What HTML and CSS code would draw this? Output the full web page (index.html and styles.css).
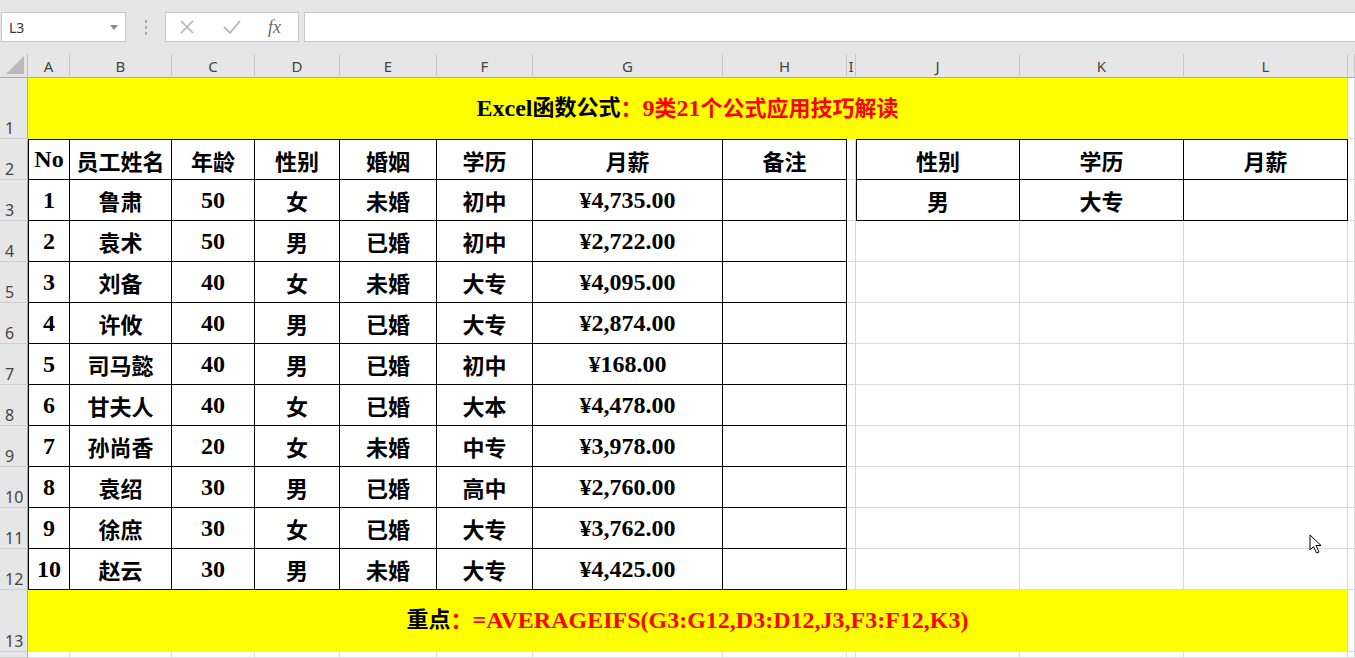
FILE: index.html
```html
<!DOCTYPE html>
<html lang="zh">
<head>
<meta charset="utf-8">
<title>Excel</title>
<link rel="stylesheet" href="styles.css">
</head>
<body>
<div class="app">
  <div class="bar">
    <div class="namebox"><span class="nm">L3</span><svg class="caret" width="8" height="5" viewBox="0 0 8 5"><path d="M0 0 L8 0 L4 5 Z" fill="#8a8a8a"/></svg></div>
    <div class="grip"><i></i><i></i><i></i></div>
    <div class="fxbox">
      <svg class="ic" width="18" height="18" viewBox="0 0 18 18"><path d="M3 3 L15 15 M15 3 L3 15" stroke="#b4b4b4" stroke-width="1.6" fill="none"/></svg>
      <svg class="ic" width="20" height="18" viewBox="0 0 20 18"><path d="M2 9 L8 15 L18 3" stroke="#b4b4b4" stroke-width="1.8" fill="none"/></svg>
      <span class="fx">fx</span>
    </div>
    <div class="input"></div>
  </div>

  <div class="grid">
    <!-- header -->
    <div class="corner"><svg width="18" height="18" viewBox="0 0 18 18"><path d="M18 0 L18 18 L0 18 Z" fill="#b9b9b9"/></svg></div>
    <div class="ch">A</div><div class="ch">B</div><div class="ch">C</div><div class="ch">D</div><div class="ch">E</div><div class="ch">F</div><div class="ch">G</div><div class="ch">H</div><div class="ch">I</div><div class="ch">J</div><div class="ch">K</div><div class="ch">L</div><div class="ch"></div>

    <!-- row 1 -->
    <div class="rh">1</div>
    <div class="c title"><span class="lat">Excel</span>函数公式<span class="red">：<span class="lat">9</span>类<span class="lat">21</span>个公式应用技巧解读</span></div>
    <div class="c"></div>

    <!-- row 2 -->
    <div class="rh">2</div>
    <div class="c b bt bl n">No</div><div class="c b bt">员工姓名</div><div class="c b bt">年龄</div><div class="c b bt">性别</div><div class="c b bt">婚姻</div><div class="c b bt">学历</div><div class="c b bt">月薪</div><div class="c b bt">备注</div>
    <div class="c"></div>
    <div class="c b bt bl">性别</div><div class="c b bt">学历</div><div class="c b bt">月薪</div>
    <div class="c"></div>

    <!-- row 3 -->
    <div class="rh">3</div>
    <div class="c b bl n">1</div><div class="c b">鲁肃</div><div class="c b n">50</div><div class="c b">女</div><div class="c b">未婚</div><div class="c b">初中</div><div class="c b n">¥4,735.00</div><div class="c b"></div>
    <div class="c"></div>
    <div class="c b bl">男</div><div class="c b">大专</div><div class="c b"></div>
    <div class="c"></div>

    <!-- row 4 -->
    <div class="rh">4</div>
    <div class="c b bl n">2</div><div class="c b">袁术</div><div class="c b n">50</div><div class="c b">男</div><div class="c b">已婚</div><div class="c b">初中</div><div class="c b n">¥2,722.00</div><div class="c b"></div>
    <div class="c"></div><div class="c"></div><div class="c"></div><div class="c"></div><div class="c"></div>

    <!-- row 5 -->
    <div class="rh">5</div>
    <div class="c b bl n">3</div><div class="c b">刘备</div><div class="c b n">40</div><div class="c b">女</div><div class="c b">未婚</div><div class="c b">大专</div><div class="c b n">¥4,095.00</div><div class="c b"></div>
    <div class="c"></div><div class="c"></div><div class="c"></div><div class="c"></div><div class="c"></div>

    <!-- row 6 -->
    <div class="rh">6</div>
    <div class="c b bl n">4</div><div class="c b">许攸</div><div class="c b n">40</div><div class="c b">男</div><div class="c b">已婚</div><div class="c b">大专</div><div class="c b n">¥2,874.00</div><div class="c b"></div>
    <div class="c"></div><div class="c"></div><div class="c"></div><div class="c"></div><div class="c"></div>

    <!-- row 7 -->
    <div class="rh">7</div>
    <div class="c b bl n">5</div><div class="c b">司马懿</div><div class="c b n">40</div><div class="c b">男</div><div class="c b">已婚</div><div class="c b">初中</div><div class="c b n">¥168.00</div><div class="c b"></div>
    <div class="c"></div><div class="c"></div><div class="c"></div><div class="c"></div><div class="c"></div>

    <!-- row 8 -->
    <div class="rh">8</div>
    <div class="c b bl n">6</div><div class="c b">甘夫人</div><div class="c b n">40</div><div class="c b">女</div><div class="c b">已婚</div><div class="c b">大本</div><div class="c b n">¥4,478.00</div><div class="c b"></div>
    <div class="c"></div><div class="c"></div><div class="c"></div><div class="c"></div><div class="c"></div>

    <!-- row 9 -->
    <div class="rh">9</div>
    <div class="c b bl n">7</div><div class="c b">孙尚香</div><div class="c b n">20</div><div class="c b">女</div><div class="c b">未婚</div><div class="c b">中专</div><div class="c b n">¥3,978.00</div><div class="c b"></div>
    <div class="c"></div><div class="c"></div><div class="c"></div><div class="c"></div><div class="c"></div>

    <!-- row 10 -->
    <div class="rh">10</div>
    <div class="c b bl n">8</div><div class="c b">袁绍</div><div class="c b n">30</div><div class="c b">男</div><div class="c b">已婚</div><div class="c b">高中</div><div class="c b n">¥2,760.00</div><div class="c b"></div>
    <div class="c"></div><div class="c"></div><div class="c"></div><div class="c"></div><div class="c"></div>

    <!-- row 11 -->
    <div class="rh">11</div>
    <div class="c b bl n">9</div><div class="c b">徐庶</div><div class="c b n">30</div><div class="c b">女</div><div class="c b">已婚</div><div class="c b">大专</div><div class="c b n">¥3,762.00</div><div class="c b"></div>
    <div class="c"></div><div class="c"></div><div class="c"></div><div class="c"></div><div class="c"></div>

    <!-- row 12 -->
    <div class="rh">12</div>
    <div class="c b bl n">10</div><div class="c b">赵云</div><div class="c b n">30</div><div class="c b">男</div><div class="c b">未婚</div><div class="c b">大专</div><div class="c b n">¥4,425.00</div><div class="c b"></div>
    <div class="c"></div><div class="c"></div><div class="c"></div><div class="c"></div><div class="c"></div>

    <!-- row 13 -->
    <div class="rh">13</div>
    <div class="c title">重点<span class="red">：<span class="lat">=AVERAGEIFS(G3:G12,D3:D12,J3,F3:F12,K3)</span></span></div>
    <div class="c"></div>

    <!-- row 14 -->
    <div class="rh"></div>
    <div class="c"></div><div class="c"></div><div class="c"></div><div class="c"></div><div class="c"></div><div class="c"></div><div class="c"></div><div class="c"></div><div class="c"></div><div class="c"></div><div class="c"></div><div class="c"></div><div class="c"></div>
  </div>

  <svg class="cursor" width="14" height="21" viewBox="0 0 14 21"><path d="M1 1 L1 16 L4.5 12.5 L7.5 19 L10 18 L7 11.5 L12 11.5 Z" fill="#fff" stroke="#000" stroke-width="1" stroke-linejoin="round"/></svg>
</div>
</body>
</html>
```

FILE: styles.css
```css
html, body {
  margin: 0;
  padding: 0;
  background: #ffffff;
  overflow: hidden;
}
.app {
  position: relative;
  width: 1355px;
  height: 658px;
  overflow: hidden;
  font-family: "Liberation Serif", "Noto Sans CJK SC", serif;
}
.bar {
  height: 54px;
  background: #e6e6e6;
  box-sizing: border-box;
  padding-top: 12px;
  display: flex;
  align-items: flex-start;
}
.namebox {
  margin-left: 1px;
  width: 125px;
  height: 30px;
  box-sizing: border-box;
  background: #fff;
  border: 1px solid #c9c9c9;
  display: flex;
  align-items: center;
  justify-content: space-between;
  padding: 0 7px 0 7px;
  font-family: "Noto Sans", "Liberation Sans", sans-serif;
  font-size: 14px;
  color: #333;
}
.grip {
  width: 39px;
  height: 30px;
  display: flex;
  flex-direction: column;
  align-items: center;
  justify-content: center;
  gap: 3px;
}
.grip i {
  display: block;
  width: 2px;
  height: 3px;
  background: #a9a9a9;
}
.fxbox {
  width: 134px;
  height: 30px;
  box-sizing: border-box;
  background: #fff;
  border: 1px solid #c9c9c9;
  display: flex;
  align-items: center;
  padding-left: 12px;
  gap: 26px;
}
.fx {
  font-family: "Liberation Serif", serif;
  font-style: italic;
  font-size: 18px;
  color: #6a6a6a;
}
.input {
  margin-left: 5px;
  flex: 1;
  height: 30px;
  box-sizing: border-box;
  background: #fff;
  border: 1px solid #c9c9c9;
  border-right: none;
}
.grid {
  display: grid;
  grid-template-columns: 28px 42px 102px 83px 85px 97px 96px 190px 124px 9px 164px 164px 164px 7px;
  grid-template-rows: 24px 61px repeat(11, 41px) 62px 6px;
}
.corner {
  background: #e6e6e6;
  border-right: 1px solid #c0c0c0;
  border-bottom: 1px solid #ababab;
  box-sizing: border-box;
  display: flex;
  align-items: flex-end;
  justify-content: flex-end;
  padding: 0 3px 3px 0;
}
.ch {
  background: #e6e6e6;
  border-right: 1px solid #c8c8c8;
  border-bottom: 1px solid #ababab;
  box-sizing: border-box;
  display: flex;
  align-items: flex-end;
  justify-content: center;
  padding-bottom: 2px;
  font-family: "Noto Sans", "Liberation Sans", sans-serif;
  font-size: 15px;
  line-height: 18px;
  color: #444;
}
.rh {
  background: #e6e6e6;
  border-right: 1px solid #ababab;
  border-bottom: 1px solid #cfcfcf;
  box-sizing: border-box;
  display: flex;
  align-items: flex-end;
  padding: 0 0 0 5px;
  font-family: "Noto Sans", "Liberation Sans", sans-serif;
  font-size: 16px;
  line-height: 20px;
  color: #444;
}
.c {
  border-right: 1px solid #d9d9d9;
  border-bottom: 1px solid #d9d9d9;
  box-sizing: border-box;
  display: flex;
  align-items: center;
  justify-content: center;
  font-weight: bold;
  font-size: 22px;
  color: #000;
  white-space: nowrap;
}
.n {
  font-size: 24px;
}
.b {
  border-right: 1px solid #000;
  border-bottom: 1px solid #000;
}
.bt {
  border-top: 1px solid #000;
}
.bl {
  border-left: 1px solid #000;
}
.title {
  grid-column: span 12;
  background: #ffff00;
  font-size: 22px;
  line-height: 1;
  padding-bottom: 2px;
  border-right: 1px solid #d9d9d9;
  border-bottom: none;
}
.lat {
  font-size: 24px;
}
.red {
  color: #ff0000;
}
.cursor {
  position: absolute;
  left: 1309px;
  top: 534px;
}
```
